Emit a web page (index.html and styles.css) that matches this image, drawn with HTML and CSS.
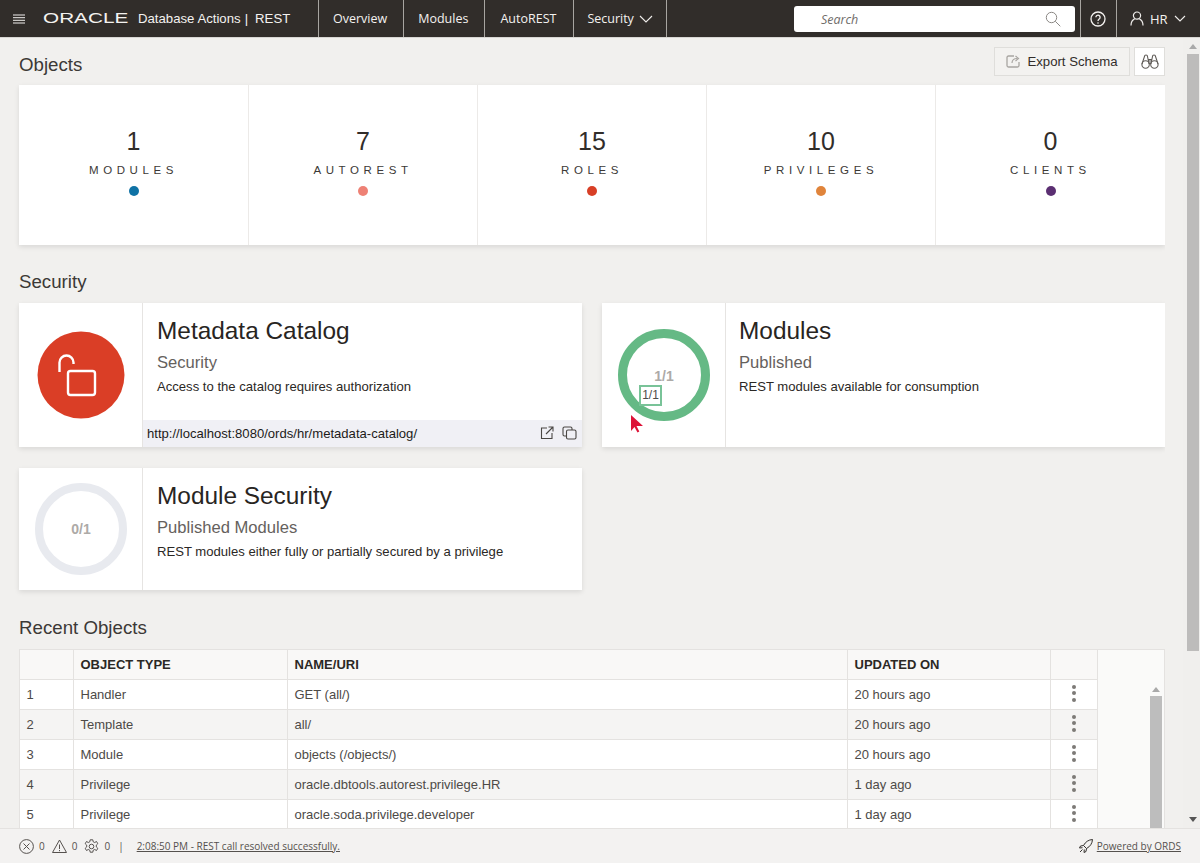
FILE: index.html
```html
<!DOCTYPE html>
<html lang="en">
<head>
  <meta charset="UTF-8">
  <title>Database Actions | REST</title>
  <link rel="stylesheet" href="styles.css">
</head>
<body>
  <header class="topbar">
    <div class="brand">
      <svg class="burger" width="12" height="10" viewBox="0 0 12 10"><path d="M0 1h12M0 3.700h12M0 6.300h12M0 9h12" stroke="#f0eeec" stroke-width="1"/></svg>
      <span class="logo"><span class="logo-text">ORACLE</span></span>
      <span class="app-name">Database Actions</span>
      <span class="app-sep">|</span>
      <span class="app-name">REST</span>
    </div>
    <nav class="nav">
      <a class="nav-item">Overview</a>
      <a class="nav-item">Modules</a>
      <a class="nav-item nav-auto">AutoREST</a>
      <a class="nav-item nav-security">Security
        <svg width="14" height="8" viewBox="0 0 14 8"><path d="M1 1l6 6 6-6" fill="none" stroke="#f0eeec" stroke-width="1.100"/></svg>
      </a>
    </nav>
    <div class="search">
      <span class="search-text">Search</span>
      <svg width="16" height="16" viewBox="0 0 16 16"><circle cx="6.500" cy="6.500" r="5.200" fill="none" stroke="#8b8885" stroke-width="1"/><path d="M10.300 10.300l5 5" stroke="#8b8885" stroke-width="1"/></svg>
    </div>
    <div class="top-help">
      <svg width="16" height="16" viewBox="0 0 16 16"><circle cx="8" cy="8" r="7" fill="none" stroke="#f4f2f0" stroke-width="1.300"/><path d="M5.900 6.300a2.100 2.100 0 1 1 3.300 1.700C8.400 8.600 8 9 8 10" fill="none" stroke="#f4f2f0" stroke-width="1.300"/><circle cx="8" cy="12" r=".8" fill="#f4f2f0"/></svg>
    </div>
    <div class="top-user">
      <svg width="14" height="15" viewBox="0 0 14 15"><circle cx="7" cy="4.600" r="3.600" fill="none" stroke="#f0eeec" stroke-width="1.200"/><path d="M1 14.500c0-3.500 2-5.800 3.600-6.600M13 14.500c0-3.500-2-5.800-3.600-6.600" fill="none" stroke="#f0eeec" stroke-width="1.200"/></svg>
      <span>HR</span>
      <svg width="12" height="7" viewBox="0 0 12 7"><path d="M1 1l5 5 5-5" fill="none" stroke="#f0eeec" stroke-width="1.100"/></svg>
    </div>
  </header>

  <main class="page">
    <div class="head-row">
      <h2 class="section-title">Objects</h2>
      <div class="head-actions">
        <button class="btn-export">
          <svg width="15" height="15" viewBox="0 0 15 15"><path d="M8 2H2.500A1.500 1.500 0 0 0 1 3.500v8A1.500 1.500 0 0 0 2.500 13h9a1.500 1.500 0 0 0 1.500-1.500V8" fill="none" stroke="#a8a5a1" stroke-width="1.300"/><path d="M6 9c0-3 2-4.500 5-4.500M9.500 2l3 2.500-3 2.500" fill="none" stroke="#a8a5a1" stroke-width="1.200"/></svg>
          Export Schema
        </button>
        <button class="btn-find">
          <svg width="18" height="16" viewBox="0 0 18 16"><circle cx="4.600" cy="10.500" r="3.700" fill="none" stroke="#5f5b57" stroke-width="1.100"/><circle cx="13.400" cy="10.500" r="3.700" fill="none" stroke="#5f5b57" stroke-width="1.100"/><path d="M1 10l2.500-7.500a1.500 1.500 0 0 1 3 0L8 9.500h2l1.500-7a1.500 1.500 0 0 1 3 0L17 10M8 9.500v-4h2v4" fill="none" stroke="#5f5b57" stroke-width="1.100"/></svg>
        </button>
      </div>
    </div>

    <section class="tiles">
      <div class="tile"><div class="tile-num">1</div><div class="tile-label">MODULES</div><span class="dot dot-modules"></span></div>
      <div class="tile"><div class="tile-num">7</div><div class="tile-label">AUTOREST</div><span class="dot dot-autorest"></span></div>
      <div class="tile"><div class="tile-num">15</div><div class="tile-label">ROLES</div><span class="dot dot-roles"></span></div>
      <div class="tile"><div class="tile-num">10</div><div class="tile-label">PRIVILEGES</div><span class="dot dot-privileges"></span></div>
      <div class="tile"><div class="tile-num">0</div><div class="tile-label">CLIENTS</div><span class="dot dot-clients"></span></div>
    </section>

    <h2 class="section-title security-title">Security</h2>

    <section class="cards">
      <div class="card card-tall">
        <div class="card-side">
          <svg width="88" height="88" viewBox="0 0 88 88">
            <circle cx="44" cy="44" r="43.500" fill="#da3e26"/>
            <rect x="31" y="40" width="27" height="24" rx="2.500" fill="none" stroke="#fff" stroke-width="2.400"/>
            <path d="M22.500 41V31.500a7 7 0 0 1 14 0V33" fill="none" stroke="#fff" stroke-width="2.400"/>
          </svg>
        </div>
        <div class="card-main">
          <div class="card-body">
            <h3 class="card-title">Metadata Catalog</h3>
            <div class="card-sub">Security</div>
            <p class="card-desc">Access to the catalog requires authorization</p>
          </div>
          <div class="card-url">
            <span class="url-text">http://localhost:8080/ords/hr/metadata-catalog/</span>
            <svg width="14" height="14" viewBox="0 0 14 14"><path d="M7 2H1.500v10.500H12V7M6 8l7-7M8.500 1H13v4.500" fill="none" stroke="#4a4744" stroke-width="1.100"/></svg>
            <svg width="15" height="14" viewBox="0 0 15 14"><rect x="1" y="1" width="9" height="9" rx="1.500" fill="none" stroke="#4a4744" stroke-width="1.100"/><rect x="4.500" y="4" width="9.500" height="9" rx="1.500" fill="#f0f0f5" stroke="#4a4744" stroke-width="1.100"/></svg>
          </div>
        </div>
      </div>

      <div class="card card-tall card-modules">
        <div class="card-side card-side-ring">
          <svg width="94" height="94" viewBox="0 0 94 94">
            <circle cx="47" cy="47" r="41.500" fill="none" stroke="#65b985" stroke-width="9"/>
            <text class="ring-text" x="47" y="52.500" text-anchor="middle">1/1</text>
          </svg>
          <span class="ring-tip">1/1</span>
          <svg class="pointer" width="14" height="20" viewBox="0 0 14 20"><path d="M1 1v16l3.500-4 3 5.500 1.800-1-2.800-5.500H13z" fill="#dd1237"/></svg>
        </div>
        <div class="card-main">
          <div class="card-body">
            <h3 class="card-title">Modules</h3>
            <div class="card-sub">Published</div>
            <p class="card-desc">REST modules available for consumption</p>
          </div>
        </div>
      </div>

      <div class="card card-short">
        <div class="card-side">
          <svg width="94" height="94" viewBox="0 0 94 94">
            <circle cx="47" cy="47" r="42" fill="none" stroke="#e8eaef" stroke-width="8"/>
            <text class="ring-text" x="47" y="52" text-anchor="middle">0/1</text>
          </svg>
        </div>
        <div class="card-main">
          <div class="card-body">
            <h3 class="card-title">Module Security</h3>
            <div class="card-sub">Published Modules</div>
            <p class="card-desc">REST modules either fully or partially secured by a privilege</p>
          </div>
        </div>
      </div>
    </section>

    <h2 class="section-title recent-title">Recent Objects</h2>

    <section class="recent">
      <table class="grid">
        <thead>
          <tr><th class="col-num"></th><th class="col-type">OBJECT TYPE</th><th class="col-name">NAME/URI</th><th class="col-date">UPDATED ON</th><th class="col-menu"></th></tr>
        </thead>
        <tbody>
          <tr><td>1</td><td>Handler</td><td>GET (all/)</td><td>20 hours ago</td><td class="kebab"><i></i><i></i><i></i></td></tr>
          <tr><td>2</td><td>Template</td><td>all/</td><td>20 hours ago</td><td class="kebab"><i></i><i></i><i></i></td></tr>
          <tr><td>3</td><td>Module</td><td>objects (/objects/)</td><td>20 hours ago</td><td class="kebab"><i></i><i></i><i></i></td></tr>
          <tr><td>4</td><td>Privilege</td><td>oracle.dbtools.autorest.privilege.HR</td><td>1 day ago</td><td class="kebab"><i></i><i></i><i></i></td></tr>
          <tr><td>5</td><td>Privilege</td><td>oracle.soda.privilege.developer</td><td>1 day ago</td><td class="kebab"><i></i><i></i><i></i></td></tr>
        </tbody>
      </table>
      <div class="grid-filler">
        <div class="grid-scroll">
          <span class="arrow-up"></span>
          <span class="grid-thumb"></span>
        </div>
      </div>
    </section>

    <div class="page-scroll">
      <span class="arrow-up"></span>
      <span class="page-thumb"></span>
      <span class="arrow-down"></span>
    </div>
  </main>

  <footer class="statusbar">
    <svg width="15" height="15" viewBox="0 0 15 15"><circle cx="7.500" cy="7.500" r="6.900" fill="none" stroke="#55514e" stroke-width="1"/><path d="M4.500 4.500l6 6M10.500 4.500l-6 6" stroke="#55514e" stroke-width="1"/></svg>
    <span class="count">0</span>
    <svg width="15" height="14" viewBox="0 0 15 14"><path d="M7.500 1L14.500 13.500H.5zM7.500 5.500v4.500M7.500 11v1.200" fill="none" stroke="#55514e" stroke-width="1"/></svg>
    <span class="count">0</span>
    <svg width="15" height="15" viewBox="0 0 15 15"><circle cx="7.500" cy="7.500" r="2.300" fill="none" stroke="#55514e" stroke-width="1"/><path d="M6.200.8h2.600l.4 2 1.500.7 1.800-1 1.300 2.200-1.500 1.400v1.800l1.500 1.400-1.300 2.200-1.800-1-1.500.7-.4 2H6.200l-.4-2-1.500-.7-1.800 1-1.300-2.200 1.500-1.400V6.100L1.200 4.700l1.300-2.200 1.800 1 1.500-.7z" fill="none" stroke="#55514e" stroke-width="1"/></svg>
    <span class="count">0</span>
    <span class="status-sep">|</span>
    <a class="status-msg">2:08:50 PM - REST call resolved successfully.</a>
    <a class="powered">
      <svg width="14" height="14" viewBox="0 0 14 14"><path d="M13.500.5C9.500.8 6.500 2.800 4.500 6.500l3 3c3.700-2 5.700-5 6-9zM4.500 6.500L1.500 7l-1 2 3-.3M7.500 9.500L7 12.500l-2 1 .3-3M3.500 10.500L1 13" fill="none" stroke="#35322f" stroke-width="1"/></svg>
      <span>Powered by ORDS</span>
    </a>
  </footer>
</body>
</html>
```

FILE: styles.css
```css
* {
  box-sizing: border-box;
}
html, body {
  height: 100%;
  margin: 0;
}
body {
  display: flex;
  flex-direction: column;
  overflow: hidden;
  font-family: "Liberation Sans", Arial, sans-serif;
  color: #312d2a;
  background: #f1f0ee;
}

/* top bar */
.topbar {
  display: flex;
  align-items: stretch;
  flex: none;
  height: 38px;
  background: #312d2a;
  border-bottom: 1px solid #d8d6d3;
  color: #f4f2f0;
}
.brand {
  display: flex;
  align-items: center;
  width: 318px;
  padding-left: 13px;
  font-size: 13.200px;
}
.burger {
  margin-right: 18px;
}
.logo {
  width: 95px;
  overflow: visible;
}
.logo-text {
  display: inline-block;
  font-size: 14.500px;
  line-height: 14px;
  transform: scaleX(1.430);
  transform-origin: left center;
}
.app-sep {
  margin: 0 7px 0 4px;
}
.nav {
  display: flex;
  border-right: 1px solid #a8a5a1;
}
.nav-item {
  display: flex;
  align-items: center;
  gap: 5px;
  padding: 0 16px 0 14px;
  border-left: 1px solid #a8a5a1;
  font-family: "Open Sans", sans-serif;
  font-size: 12.500px;
}
.nav-auto {
  padding: 0 17px 0 15px;
}
.nav-security {
  padding: 0 13px;
}
.search {
  display: flex;
  align-items: center;
  justify-content: space-between;
  width: 281px;
  height: 26px;
  margin: 6px 5px 0 127px;
  padding: 0 14px 0 27px;
  background: #fff;
  border-radius: 3px;
}
.search-text {
  font-family: "Open Sans", sans-serif;
  font-size: 12.500px;
  font-style: italic;
  color: #6f6c69;
}
.top-help {
  display: flex;
  align-items: center;
  justify-content: center;
  width: 36px;
  border-left: 1px solid #a8a5a1;
}
.top-user {
  display: flex;
  align-items: center;
  gap: 6px;
  flex: 1;
  padding-left: 13px;
  border-left: 1px solid #a8a5a1;
  font-family: "Open Sans", sans-serif;
  font-size: 13px;
}

/* page */
.page {
  position: relative;
  flex: 1;
  min-height: 0;
  overflow: hidden;
  width: 1165px;
  padding-left: 19px;
}
.section-title {
  margin: 0;
  font-size: 18.700px;
  font-weight: 400;
  line-height: 22px;
  color: #3c3936;
}
.head-row {
  display: flex;
  justify-content: space-between;
  height: 47px;
  padding-top: 9px;
}
.head-row .section-title {
  padding-top: 7px;
}
.head-actions {
  display: flex;
  gap: 4px;
  height: 29px;
}
.btn-export, .btn-find {
  display: flex;
  align-items: center;
  justify-content: center;
  border: 1px solid #dfdedb;
  font-family: inherit;
  color: #312d2a;
}
.btn-export {
  gap: 6px;
  width: 136px;
  background: #f3f2f0;
  font-size: 13.200px;
}
.btn-find {
  width: 31px;
  background: #fff;
  padding: 0;
}
.tiles {
  display: grid;
  grid-template-columns: repeat(4, 229px) 1fr;
  height: 160px;
  background: #fff;
  box-shadow: 0 2px 5px rgba(0, 0, 0, .1);
}
.tile {
  display: flex;
  flex-direction: column;
  align-items: center;
  padding-top: 42px;
  border-left: 1px solid #eceae8;
}
.tile:first-child {
  border-left: 0;
}
.tile-num {
  font-size: 25px;
  line-height: 28px;
}
.tile-label {
  margin-top: 8px;
  font-size: 11.500px;
  line-height: 14px;
  letter-spacing: 4.600px;
  color: #3c3936;
}
.dot {
  width: 10px;
  height: 10px;
  margin-top: 9px;
  border-radius: 50%;
}
.dot-modules { background: #0f72a5; }
.dot-autorest { background: #ee8175; }
.dot-roles { background: #d83f26; }
.dot-privileges { background: #e0843b; }
.dot-clients { background: #5b2f72; }

.security-title {
  padding: 26px 0 10px;
  height: 58px;
}
.cards {
  display: grid;
  grid-template-columns: 563px 563px;
  grid-template-rows: 144px 122px;
  gap: 21px 20px;
}
.card {
  display: flex;
  background: #fff;
  box-shadow: 0 2px 5px rgba(0, 0, 0, .1);
}
.card-side {
  position: relative;
  display: flex;
  flex: none;
  align-items: center;
  justify-content: center;
  width: 124px;
  border-right: 1px solid #e6e4e2;
}
.card-main {
  display: flex;
  flex: 1;
  flex-direction: column;
  justify-content: space-between;
}
.card-body {
  padding: 13px 14px 0;
}
.card-modules .card-body {
  padding-left: 13px;
}
.card-title {
  margin: 0;
  font-size: 24.400px;
  font-weight: 400;
  line-height: 29px;
  color: #28251f;
}
.card-sub {
  margin-top: 7.500px;
  font-size: 16.600px;
  line-height: 20px;
  color: #65615d;
}
.card-desc {
  margin: 5.500px 0 0;
  font-size: 13.100px;
  line-height: 17px;
  color: #2b2825;
}
.card-url {
  display: flex;
  align-items: center;
  gap: 8px;
  height: 27px;
  padding: 0 5px 1px 4px;
  background: #f0f0f5;
  font-size: 13.100px;
}
.url-text {
  flex: 1;
  color: #1d1b19;
}
.ring-text {
  font-family: "Liberation Sans", Arial, sans-serif;
  font-size: 14px;
  font-weight: 700;
  fill: #adaaa7;
}
.ring-tip {
  position: absolute;
  left: 37px;
  top: 82px;
  width: 23px;
  height: 21px;
  background: #fff;
  border: 2px solid #79c398;
  font-size: 12px;
  line-height: 17px;
  text-align: center;
  color: #4f4c49;
}
.pointer {
  position: absolute;
  left: 28px;
  top: 111px;
}

.recent-title {
  padding: 27px 0 10px;
  height: 59px;
}
.recent {
  display: flex;
  height: 180px;
  background: #fafaf9;
}
.grid {
  flex: none;
  width: 1078px;
  table-layout: fixed;
  border-collapse: collapse;
  font-size: 13px;
}
.col-num { width: 54px; }
.col-type { width: 214px; }
.col-name { width: 560px; }
.col-date { width: 203px; }
.col-menu { width: 47px; }
.grid th, .grid td {
  height: 30px;
  padding: 0 6.500px;
  border: 1px solid #e4e2e0;
  text-align: left;
  color: #4d4a47;
  overflow: hidden;
}
.grid th {
  background: #f9f8f7;
  font-weight: 700;
  color: #2b2825;
}
.grid tbody tr:nth-child(odd) td {
  background: #fff;
}
.grid tbody tr:nth-child(even) td {
  background: #f5f4f3;
}
.grid td.kebab {
  padding: 0 0 3px;
  text-align: center;
  line-height: 0;
}
.kebab i {
  display: block;
  width: 4px;
  height: 4px;
  margin: 0 auto 2.500px;
  border-radius: 50%;
  background: #7d7a77;
}
.kebab i:last-child {
  margin-bottom: 0;
}
.grid-filler {
  display: flex;
  flex: 1;
  justify-content: flex-end;
  padding: 30px 2px 0 0;
  border-top: 1px solid #e4e2e0;
  border-right: 1px solid #e4e2e0;
}
.grid-scroll {
  display: flex;
  flex-direction: column;
  align-items: center;
  width: 13px;
}
.grid-scroll .arrow-up {
  margin-top: 7px;
}
.grid-thumb {
  flex: 1;
  width: 12px;
  margin-top: 4px;
  background: #bdbdbd;
}

/* page scrollbar, sits over the right edge */
.page-scroll {
  position: fixed;
  top: 38px;
  right: 0;
  bottom: 35px;
  display: flex;
  flex-direction: column;
  align-items: center;
  width: 17px;
  padding: 6px 0 6px 2px;
  background: #f0efed;
}
.page-thumb {
  width: 12px;
  height: 597px;
  margin-top: 5px;
  background: #bdbcbb;
}
.arrow-up, .arrow-down {
  width: 0;
  height: 0;
  border-left: 4px solid transparent;
  border-right: 4px solid transparent;
}
.arrow-up {
  border-bottom: 5px solid #a9a9a9;
}
.arrow-down {
  margin-top: auto;
  border-top: 5px solid #555;
}

/* status bar */
.statusbar {
  display: flex;
  flex: none;
  align-items: center;
  position: relative;
  height: 35px;
  padding: 0 19px;
  background: #f3f2f1;
  border-top: 1px solid #e4e2e0;
  font-family: "Open Sans", sans-serif;
  font-size: 10px;
  color: #55514e;
}
.count {
  margin: 0 7px 0 5px;
}
.status-sep {
  margin: 0 13px 0 1px;
}
.status-msg {
  text-decoration: underline;
}
.powered {
  display: flex;
  align-items: center;
  gap: 4px;
  margin-left: auto;
  margin-right: 0;
  text-decoration: underline;
}
```
